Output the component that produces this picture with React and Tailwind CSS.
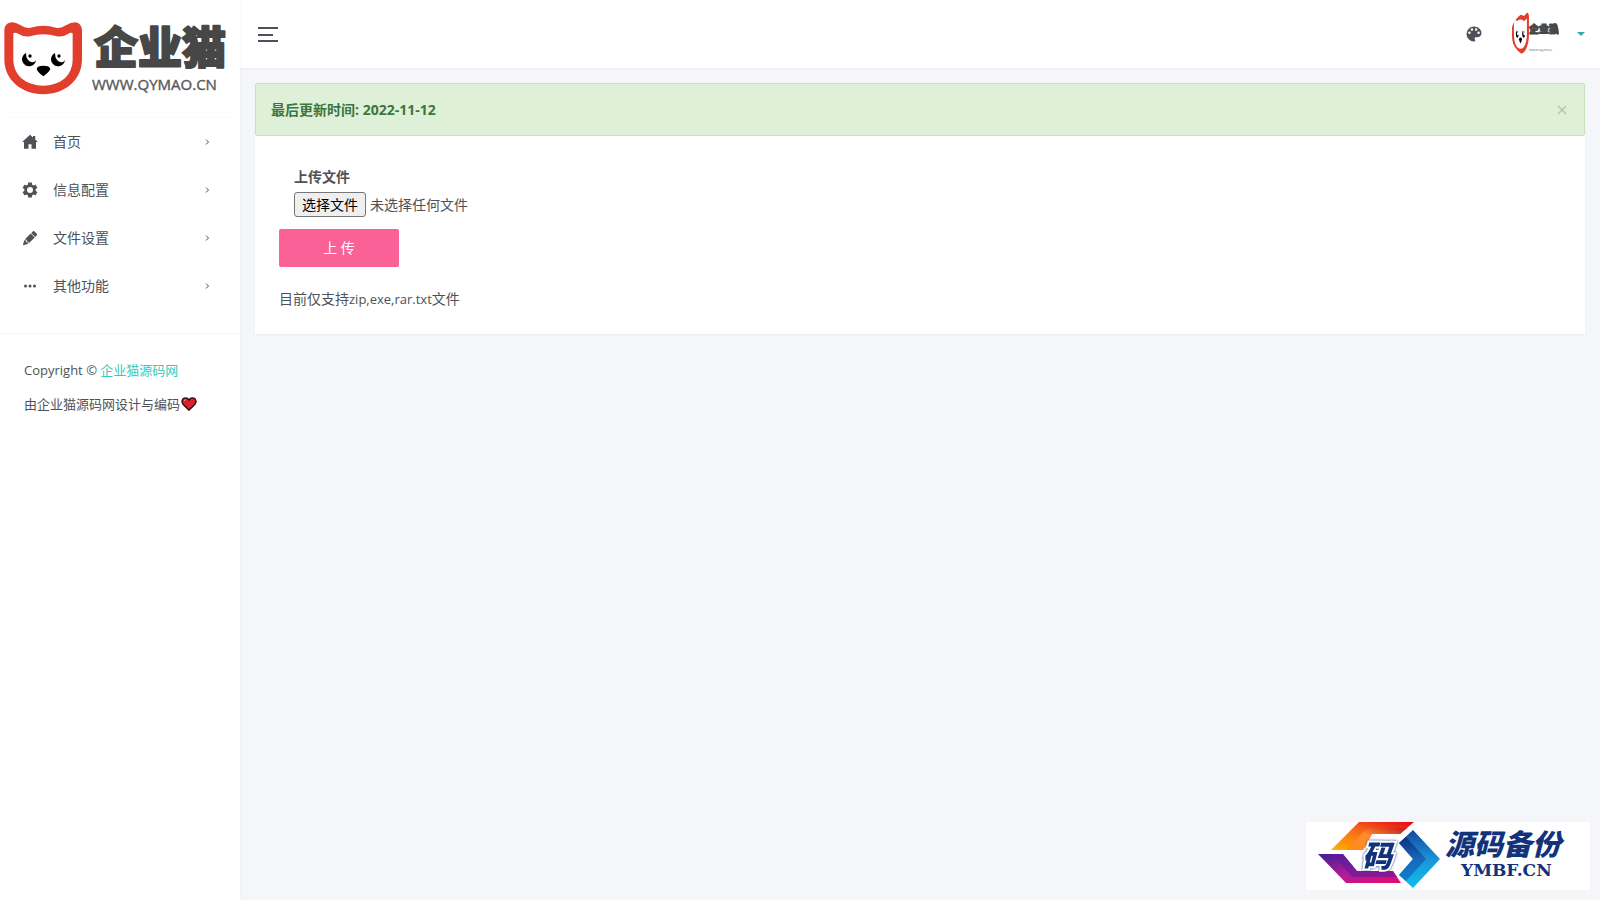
import React, { useState, useRef } from 'react';

const menu = [
  { name: '首页', icon: 'home' },
  { name: '信息配置', icon: 'cog' },
  { name: '文件设置', icon: 'pencil' },
  { name: '其他功能', icon: 'dots' },
];

const paths = {
  home: 'M10 21v-6h4v6h6v-9h2.500L19 8.700V4h-3v2L12 2.200 1.500 12H4v9z',
  cog: 'M12 16a4 4 0 0 1-4-4 4 4 0 0 1 4-4 4 4 0 0 1 4 4 4 4 0 0 1-4 4m7.430-3.030c.04-.32.07-.64.07-.97s-.03-.66-.07-1l2.110-1.630c.19-.15.24-.42.12-.64l-2-3.460c-.12-.22-.39-.31-.61-.22l-2.490 1c-.52-.39-1.060-.73-1.690-.98l-.37-2.650A.506.506 0 0 0 14 2h-4c-.25 0-.46.18-.5.42l-.37 2.650c-.63.25-1.170.59-1.690.98l-2.490-1c-.22-.09-.49 0-.61.22l-2 3.460c-.13.22-.07.49.12.64L4.570 11c-.04.34-.07.67-.07 1s.03.65.07.97l-2.110 1.660c-.19.15-.25.42-.12.64l2 3.460c.12.22.39.3.61.22l2.490-1.010c.52.4 1.060.74 1.690.99l.37 2.650c.04.24.25.42.5.42h4c.25 0 .46-.18.5-.42l.37-2.650c.63-.26 1.170-.59 1.690-.99l2.490 1.010c.22.08.49 0 .61-.22l2-3.460c.12-.22.07-.49-.12-.64z',
  pencil: 'M16.840 2.730c-.39 0-.77.15-1.070.44l-2.120 2.120 5.300 5.310 2.120-2.130c.59-.59.59-1.530 0-2.110L17.900 3.170c-.3-.29-.68-.44-1.060-.44M12.940 6l-8.100 8.110 2.560.28.18 2.300 2.280.17.29 2.560 8.100-8.110m-14 3.740L2.500 21.730l6.700-1.790-.24-2.160-2.310-.17-.18-2.320',
  dots: 'M16 12a2 2 0 0 1 2-2 2 2 0 0 1 2 2 2 2 0 0 1-2 2 2 2 0 0 1-2-2m-6 0a2 2 0 0 1 2-2 2 2 0 0 1 2 2 2 2 0 0 1-2 2 2 2 0 0 1-2-2m-6 0a2 2 0 0 1 2-2 2 2 0 0 1 2 2 2 2 0 0 1-2 2 2 2 0 0 1-2-2z',
  palette: 'M17.500 12a1.500 1.500 0 0 1-1.500-1.500A1.500 1.500 0 0 1 17.500 9a1.500 1.500 0 0 1 1.500 1.500 1.500 1.500 0 0 1-1.500 1.500m-3-4A1.500 1.500 0 0 1 13 6.500 1.500 1.500 0 0 1 14.500 5 1.500 1.500 0 0 1 16 6.500 1.500 1.500 0 0 1 14.500 8m-5 0A1.500 1.500 0 0 1 8 6.500 1.500 1.500 0 0 1 9.500 5 1.500 1.500 0 0 1 11 6.500 1.500 1.500 0 0 1 9.500 8m-3 4A1.500 1.500 0 0 1 5 10.500 1.500 1.500 0 0 1 6.500 9 1.500 1.500 0 0 1 8 10.500 1.500 1.500 0 0 1 6.500 12M12 3a9 9 0 0 0-9 9 9 9 0 0 0 9 9 1.500 1.500 0 0 0 1.500-1.500c0-.39-.15-.74-.39-1-.23-.27-.38-.62-.38-1a1.500 1.500 0 0 1 1.500-1.500H16a5 5 0 0 0 5-5c0-4.420-4.030-8-9-8z',
};

function Icon({ name, className }) {
  return (
    <svg viewBox="0 0 24 24" fill="currentColor" className={className} aria-hidden="true">
      <path d={paths[name]} />
    </svg>
  );
}

// Cat face, drawn on a 260x300 grid
function Cat() {
  return (
    <>
      <path
        fill="#e23e2e"
        d="M13 90Q14 68 38 67Q50 68 62 76Q78 86 92 83Q130 72 168 83Q182 86 198 76Q212 67 226 67Q244 69 246 90V178C246 240 195 283 130 283C65 283 13 240 13 178Z"
      />
      <path
        fill="#fff"
        d="M40 100Q46 96 56 102Q72 112 90 109Q130 96 170 109Q188 112 204 102Q212 96 218 100V178C218 228 180 257 130 257C80 257 40 228 40 178Z"
      />
      <path d="M78 159A21 21 0 1 0 108 178Q106 188 96 187Q78 183 78 159Z" />
      <circle cx="90" cy="168" r="5" />
      <path d="M165 159A21 21 0 1 0 195 178Q193 188 183 187Q165 183 165 159Z" />
      <circle cx="177" cy="168" r="5" />
      <path d="M110 207Q111 197 130 197Q150 197 151 207Q148 216 130 229Q112 216 110 207Z" />
    </>
  );
}

function Logo() {
  return (
    <svg viewBox="0 0 240 117" className="block w-full" role="img" aria-label="企业猫">
      <g transform="scale(.3333)">
        <Cat />
      </g>
      <text
        x="94"
        y="64"
        fontSize="44"
        fontWeight="900"
        fill="#474747"
        stroke="#474747"
        strokeWidth="2"
        strokeLinejoin="round"
        fontFamily="'Noto Sans CJK SC', sans-serif"
      >
        企业猫
      </text>
      <text
        x="92"
        y="90"
        fontSize="15"
        fill="#5a5a5a"
        stroke="#5a5a5a"
        strokeWidth=".4"
        fontFamily="'Open Sans', sans-serif"
      >
        WWW.QYMAO.CN
      </text>
    </svg>
  );
}

function Avatar() {
  return (
    <svg viewBox="0 0 48 48" className="block size-12 rounded-full" role="img" aria-label="头像">
      <g transform="translate(0 -10) scale(.073 .19)">
        <Cat />
      </g>
      <text
        x="18"
        y="23"
        fontSize="10"
        fontWeight="900"
        fill="#474747"
        stroke="#474747"
        strokeWidth="1"
        fontFamily="'Noto Sans CJK SC', sans-serif"
      >
        企业猫
      </text>
      <text x="18" y="41" fontSize="4" fill="#777" fontFamily="'Open Sans', sans-serif">
        www.qymao.cn
      </text>
    </svg>
  );
}

function Watermark() {
  return (
    <div className="fixed right-2.5 bottom-2.5 w-[284px] bg-white">
      <svg viewBox="0 0 284 68" className="block w-full" role="img" aria-label="源码备份 YMBF.CN">
        <defs>
          <linearGradient id="warm" x1="0" x2="1" y1="1" y2="0">
            <stop offset="0" stopColor="#ffb400" />
            <stop offset=".5" stopColor="#f9691a" />
            <stop offset="1" stopColor="#e30613" />
          </linearGradient>
          <linearGradient id="warmInner" x1="0" x2="1" y1="1" y2="0">
            <stop offset="0" stopColor="#ff8a1c" />
            <stop offset=".5" stopColor="#ff8c2c" />
            <stop offset="1" stopColor="#c8141a" />
          </linearGradient>
          <linearGradient id="violet" x1="0" x2="1" y1="0" y2="1">
            <stop offset="0" stopColor="#3b1f96" />
            <stop offset=".5" stopColor="#b01c96" />
            <stop offset="1" stopColor="#ea0a6c" />
          </linearGradient>
          <linearGradient id="cool" x1="0" x2="0" y1="0" y2="1">
            <stop offset="0" stopColor="#12499c" />
            <stop offset=".5" stopColor="#1b93d8" />
            <stop offset="1" stopColor="#0cc0ee" />
          </linearGradient>
          <linearGradient id="coolInner" x1="0" x2="0" y1="0" y2="1">
            <stop offset="0" stopColor="#0c2f78" />
            <stop offset=".5" stopColor="#1668bd" />
            <stop offset="1" stopColor="#0f7fcb" />
          </linearGradient>
        </defs>
        <path fill="url(#warm)" d="M25 28L53 0H108L94 12H66L57 28Z" />
        <path fill="url(#warmInner)" d="M40 28L61 6H101L94 12H66L57 28Z" />
        <path fill="url(#violet)" d="M12 32H37L51 49H87L95 61H40Z" />
        <path fill="#5d1aa0" opacity=".6" d="M26 32H37L51 49H87L91 55H46Z" />
        <path fill="url(#cool)" d="M107 8L134 37L107 66L93 53L107 37L93 21Z" />
        <path fill="url(#coolInner)" d="M100 15L120 37L100 59L93 53L107 37L93 21Z" />
        <text
          x="56"
          y="45"
          fontSize="30"
          fontWeight="900"
          fontStyle="italic"
          fill="#12337c"
          stroke="#fff"
          strokeWidth="4"
          paintOrder="stroke"
          className="[filter:drop-shadow(0_0_1px_#12337c)]"
          fontFamily="'Noto Sans CJK SC', sans-serif"
        >
          码
        </text>
        <text
          x="139"
          y="33"
          fontSize="29"
          fontWeight="900"
          fontStyle="italic"
          fill="#12337c"
          fontFamily="'Noto Sans CJK SC', sans-serif"
        >
          源码备份
        </text>
        <text x="155" y="54" fontSize="17" fontWeight="700" fill="#12337c" fontFamily="'DejaVu Serif', serif">
          YMBF.CN
        </text>
      </svg>
    </div>
  );
}

function Sidebar() {
  return (
    <aside className="z-10 w-60 shrink-0 bg-white shadow-xs">
      <Logo />
      <nav className="border-b border-gray-100 pb-[23px]">
        <ul className="mx-2 border-t border-gray-50">
          {menu.map((item) => (
            <li key={item.name}>
              <a href="#" className="flex h-12 items-center pr-5 pl-[13px]">
                <Icon name={item.icon} className="size-[18px]" />
                <span className="ml-3.5 flex-1">{item.name}</span>
                <svg viewBox="0 0 8 8" className="mr-px size-2" fill="none" stroke="currentColor" aria-hidden="true">
                  <path d="M3 1.500L5.500 4L3 6.500" />
                </svg>
              </a>
            </li>
          ))}
        </ul>
      </nav>
      <div className="px-6 pt-[19px] text-[13px] leading-[34px]">
        <p>
          <span className="font-medium">Copyright</span> ©{' '}
          <a href="#" className="text-[#33cabb]">
            企业猫源码网
          </a>
        </p>
        <p className="flex items-center">
          由企业猫源码网设计与编码
          <svg viewBox="0 0 16 16" className="ml-px size-4" aria-hidden="true">
            <path
              fill="#dd1f2b"
              stroke="#1b0a0a"
              strokeWidth="1.3"
              d="M8 14.200L2 8.200C.2 6 .8 2.200 4.200 1.900C6 1.800 7.400 2.800 8 4C8.600 2.800 10 1.800 11.800 1.900C15.200 2.200 15.800 6 14 8.200Z"
            />
            <path d="M3.200 5Q3.500 3.600 5 3.600" fill="none" stroke="#ff8d8d" />
          </svg>
        </p>
      </div>
    </aside>
  );
}

function Header() {
  return (
    <header className="flex h-[68px] items-center justify-between bg-white pr-[15px] pl-4 shadow-xs">
      <button type="button" aria-label="菜单" className="flex w-6 flex-col gap-1 px-0.5">
        <span className="h-0.5 w-5 bg-[#4d5259]"></span>
        <span className="mt-px h-0.5 w-[15px] bg-[#4d5259]"></span>
        <span className="h-0.5 w-5 bg-[#4d5259]"></span>
      </button>
      <div className="flex items-center">
        <button type="button" aria-label="主题" className="mr-[27px]">
          <Icon name="palette" className="size-5" />
        </button>
        <button type="button" aria-label="用户菜单" className="flex items-center gap-[18px]">
          <Avatar />
          <span className="border-x-4 border-t-4 border-x-transparent border-t-[#33a9ab]"></span>
        </button>
      </div>
    </header>
  );
}

function App() {
  const [fileName, setFileName] = useState('');
  const [showAlert, setShowAlert] = useState(true);
  const fileRef = useRef(null);

  return (
    <div className="flex min-h-screen bg-[#f5f6fa] font-['Open_Sans','Noto_Sans_CJK_SC',sans-serif] text-sm text-[#4d5259]">
      <Sidebar />
      <div className="min-w-0 flex-1">
        <Header />
        <main className="p-[15px]">
          <div className="bg-white shadow-xs">
            {showAlert && (
              <div className="flex items-center justify-between rounded-xs border border-[#c9e3bd] bg-[#dff0d8] p-[15px] font-bold text-[#3c763d]">
                <span className="leading-[21px]">最后更新时间: 2022-11-12</span>
                <button type="button" aria-label="关闭" className="px-0.5" onClick={() => setShowAlert(false)}>
                  <svg viewBox="0 0 10 10" className="size-2.5" stroke="#b4c6ae" strokeWidth="1.500" aria-hidden="true">
                    <path d="M1 1L9 9M9 1L1 9" />
                  </svg>
                </button>
              </div>
            )}
            <form className="px-6 pt-[30px] pb-[23px]" onSubmit={(e) => e.preventDefault()}>
              <div className="px-[15px]">
                <label htmlFor="file" className="mb-1 block leading-[22px] font-bold">
                  上传文件
                </label>
                <div className="flex items-center gap-1">
                  <input
                    id="file"
                    type="file"
                    ref={fileRef}
                    className="hidden"
                    onChange={(e) => setFileName(e.target.files[0] ? e.target.files[0].name : '')}
                  />
                  <button
                    type="button"
                    className="h-[25px] rounded-[3px] border border-[#767676] bg-[#efefef] px-[7px] leading-[22px] text-black"
                    onClick={() => fileRef.current.click()}
                  >
                    选择文件
                  </button>
                  <span>{fileName || '未选择任何文件'}</span>
                </div>
              </div>
              <button type="submit" className="mt-3 block h-[38px] w-[120px] rounded-xs bg-[#f96197] text-white">
                上 传
              </button>
              <p className="mt-5 leading-6">
                目前仅支持<span className="text-[13px]">zip,exe,rar.txt</span>文件
              </p>
            </form>
          </div>
        </main>
      </div>
      <Watermark />
    </div>
  );
}
export default App;
